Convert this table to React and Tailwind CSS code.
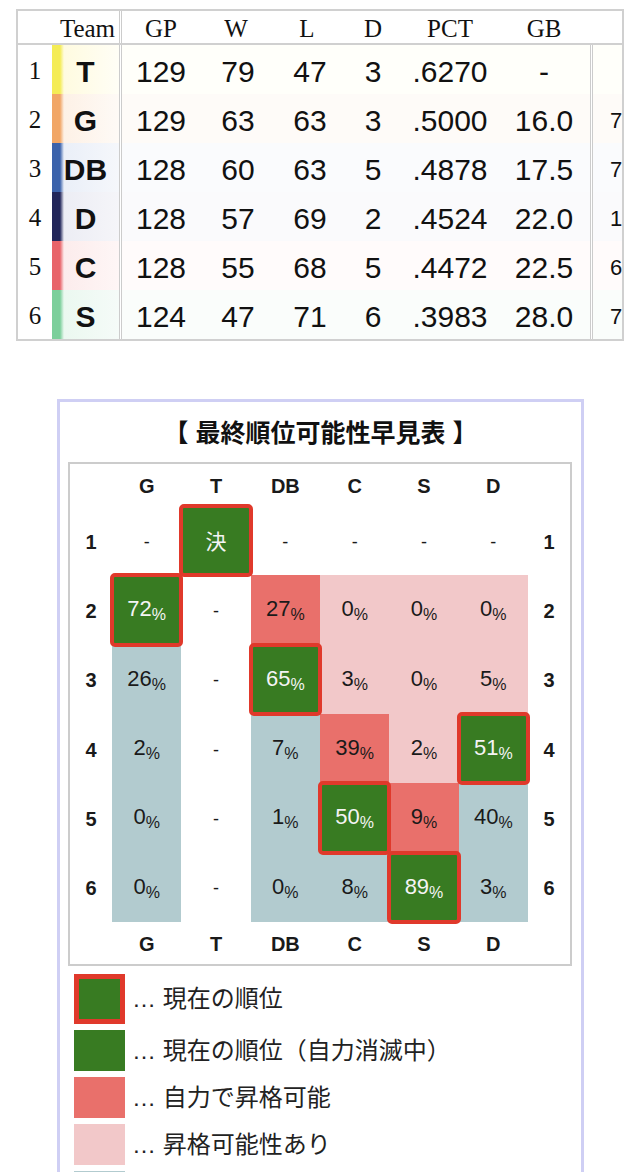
import React from 'react'

const SANS = { fontFamily: '"Liberation Sans", "Noto Sans CJK JP", sans-serif' }
const SERIF = { fontFamily: '"Liberation Serif", "Noto Sans CJK JP", serif' }
const CJK = { fontFamily: '"Liberation Sans", "Noto Sans CJK JP", sans-serif' }

const COLS = 'grid grid-cols-[34px_67px_3px_78px_76px_68px_58px_96px_92px_3px_29px]'

const teams = [
    { rank: 1, name: 'T', gp: 129, w: 79, l: 47, d: 3, pct: '.6270', gb: '-', extra: '', team: 'bg-[linear-gradient(to_right,#f4ec55_0px,#f4ec55_8px,#fffbe0_12px,#fffef6_100%)]', row: 'bg-[#fffffa]' },
    { rank: 2, name: 'G', gp: 129, w: 63, l: 63, d: 3, pct: '.5000', gb: '16.0', extra: '7', team: 'bg-[linear-gradient(to_right,#f1a666_0px,#f1a666_8px,#fdf1e6_12px,#fefaf6_100%)]', row: 'bg-[#fefbf8]' },
    { rank: 3, name: 'DB', gp: 128, w: 60, l: 63, d: 5, pct: '.4878', gb: '17.5', extra: '7', team: 'bg-[linear-gradient(to_right,#3b62ab_0px,#3b62ab_8px,#eaeff8_12px,#f5f7fb_100%)]', row: 'bg-[#fafbfd]' },
    { rank: 4, name: 'D', gp: 128, w: 57, l: 69, d: 2, pct: '.4524', gb: '22.0', extra: '10', team: 'bg-[linear-gradient(to_right,#22265a_0px,#22265a_8px,#ecedf4_12px,#f5f5f9_100%)]', row: 'bg-[#fafafc]' },
    { rank: 5, name: 'C', gp: 128, w: 55, l: 68, d: 5, pct: '.4472', gb: '22.5', extra: '6', team: 'bg-[linear-gradient(to_right,#e8646a_0px,#e8646a_8px,#fcecec_12px,#fef6f6_100%)]', row: 'bg-[#fffbfb]' },
    { rank: 6, name: 'S', gp: 124, w: 47, l: 71, d: 6, pct: '.3983', gb: '28.0', extra: '7', team: 'bg-[linear-gradient(to_right,#7ccf9b_0px,#7ccf9b_8px,#ebf8f0_12px,#f5fbf8_100%)]', row: 'bg-[#fafdfb]' },
]

const chartCols = ['G', 'T', 'DB', 'C', 'S', 'D']

const chart = [
    [['-', 'w'], ['決', 'g'], ['-', 'w'], ['-', 'w'], ['-', 'w'], ['-', 'w']],
    [['72', 'g'], ['-', 'w'], ['27', 's'], ['0', 'p'], ['0', 'p'], ['0', 'p']],
    [['26', 'b'], ['-', 'w'], ['65', 'g'], ['3', 'p'], ['0', 'p'], ['5', 'p']],
    [['2', 'b'], ['-', 'w'], ['7', 'b'], ['39', 's'], ['2', 'p'], ['51', 'g']],
    [['0', 'b'], ['-', 'w'], ['1', 'b'], ['50', 'g'], ['9', 's'], ['40', 'b']],
    [['0', 'b'], ['-', 'w'], ['0', 'b'], ['8', 'b'], ['89', 'g'], ['3', 'b']],
]

const cellBg = {
    w: '',
    g: 'bg-[#387b22] text-[#f4f4f4] relative z-10 rounded-[3px] outline-4 outline-[#e0392b] -outline-offset-2',
    s: 'bg-[#e9706b]',
    p: 'bg-[#f2c8c9]',
    b: 'bg-[#b2cbcf]',
}

const legend = [
    { sw: 'w-[51px] h-[50px] bg-[#387b22] border-[5px] border-[#e0392b]', text: '現在の順位' },
    { sw: 'w-[51px] h-[41px] bg-[#387b22]', text: '現在の順位（自力消滅中）' },
    { sw: 'w-[51px] h-[41px] bg-[#e9706b]', text: '自力で昇格可能' },
    { sw: 'w-[51px] h-[41px] bg-[#f2c8c9]', text: '昇格可能性あり' },
    { sw: 'w-[51px] h-[41px] bg-[#b2cbcf]', text: '' },
]

function Divider() {
    return <div className="h-full border-x border-[#cccccc]"></div>
}

function Standings() {
    return (
        <div className="ml-[16px] mt-[9px] w-[608px] border-2 border-[#d0d0d0] bg-white text-[#111]">
            <div className={`${COLS} h-[34px] border-b-2 border-[#d0d0d0] items-center text-[25px] leading-none`} style={SERIF}>
                <div></div>
                <div className="text-center pl-[4px] pt-[2px]">Team</div>
                <Divider />
                <div className="text-center pt-[2px]">GP</div>
                <div className="text-center pr-[4px] pt-[2px]">W</div>
                <div className="text-center pr-[6px] pt-[2px]">L</div>
                <div className="text-center pt-[2px]">D</div>
                <div className="text-center pt-[2px]">PCT</div>
                <div className="text-center pt-[2px]">GB</div>
                <div></div>
                <div></div>
            </div>
            {teams.map((t) => (
                <div key={t.rank} className={`${COLS} h-[49px] items-center`}>
                    <div className="h-full bg-white flex items-center justify-center pt-[3px] text-[25px]" style={SERIF}>{t.rank}</div>
                    <div className={`h-full flex items-center justify-center pt-[3px] text-[30px] font-bold ${t.team}`} style={SANS}>{t.name}</div>
                    <Divider />
                    {[t.gp, t.w, t.l, t.d, t.pct, t.gb].map((v, i) => (
                        <div key={i} className={`h-full flex items-center justify-center pt-[3px] text-[30px] ${t.row}`} style={SANS}>{v}</div>
                    ))}
                    <Divider />
                    <div className={`h-full flex items-center overflow-hidden whitespace-nowrap pl-[17px] pt-[3px] text-[22px] ${t.row}`} style={SANS}>{t.extra}</div>
                </div>
            ))}
        </div>
    )
}

function ChartCell({ v, c }) {
    const isNum = v !== '-' && v !== '決'
    return (
        <div className={`flex items-center justify-center pt-[2px] ${cellBg[c]}`}>
            {isNum ? (
                <span className="text-[22px] leading-none">
                    {v}<span className="text-[16px] align-[-4px]">%</span>
                </span>
            ) : v === '決' ? (
                <span className="text-[21px] leading-none" style={CJK}>決</span>
            ) : (
                <span className="text-[18px] leading-none">-</span>
            )}
        </div>
    )
}

function Chart() {
    return (
        <div className="ml-[57px] mt-[58px] w-[527px] border-[3px] border-[#cfcff4] bg-white pb-[20px]">
            <div className="h-[60px] flex items-center justify-center pt-[4px] text-[25px] font-bold text-[#111]" style={CJK}>
                【 最終順位可能性早見表 】
            </div>
            <div className="ml-[8px] w-[504px] border-2 border-[#cccccc]">
                <div className="grid grid-cols-[42px_repeat(6,1fr)_42px] grid-rows-[42px_repeat(6,1fr)_42px] h-[500px] text-[#1a1a1a]" style={SANS}>
                    <div></div>
                    {chartCols.map((c) => (
                        <div key={c} className="flex items-center justify-center pt-[2px] text-[20px] font-bold">{c}</div>
                    ))}
                    <div></div>
                    {chart.map((row, r) => (
                        <React.Fragment key={r}>
                            <div className="flex items-center justify-center pt-[2px] text-[20px] font-bold">{r + 1}</div>
                            {row.map(([v, c], i) => (
                                <ChartCell key={i} v={v} c={c} />
                            ))}
                            <div className="flex items-center justify-center pt-[2px] text-[20px] font-bold">{r + 1}</div>
                        </React.Fragment>
                    ))}
                    <div></div>
                    {chartCols.map((c) => (
                        <div key={c} className="flex items-center justify-center pt-[2px] text-[20px] font-bold">{c}</div>
                    ))}
                    <div></div>
                </div>
            </div>
            <div className="mt-[8px] pl-[14px] flex flex-col gap-[6px]">
                {legend.map((l, i) => (
                    <div key={i} className="flex items-center gap-[7px]">
                        <div className={l.sw}></div>
                        {l.text && (
                            <span className="text-[24px] leading-none text-[#222]" style={CJK}>… {l.text}</span>
                        )}
                    </div>
                ))}
            </div>
        </div>
    )
}

export default function App() {
    return (
        <div className="w-[640px] bg-white">
            <Standings />
            <Chart />
        </div>
    )
}
